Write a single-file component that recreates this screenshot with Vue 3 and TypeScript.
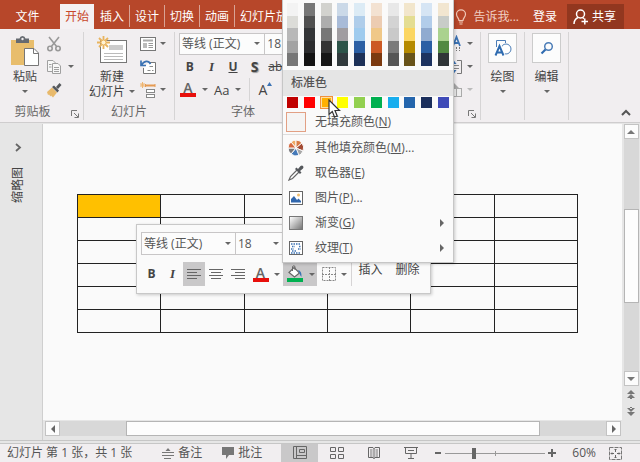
<script setup lang="ts">
import { ref } from 'vue'

const tabs: string[] = ['开始', '插入', '设计', '切换', '动画', '幻灯片放映']
const activeTab = ref('开始')
const fontName = ref('等线 (正文)')
const fontSize = ref('18')
const zoomLevel = ref(28)

const themeColors: string[][] = [
  ['#f3f3f3', '#dcdcd8', '#b8b8b8', '#a3a3a3', '#777777'],
  ['#777777', '#505050', '#333537', '#2c2d2f', '#141414'],
  ['#d2d2ce', '#adadad', '#777777', '#343434', '#171717'],
  ['#cbd9e8', '#a8bbd8', '#a09da1', '#2d5449', '#313a3d'],
  ['#dcebf5', '#afcdea', '#9fcbee', '#2b5fa4', '#1d3158'],
  ['#f3e2d2', '#ecccb2', '#f0c888', '#cc5a25', '#7c3a10'],
  ['#e8e8e8', '#d3d3d3', '#c9c9c9', '#7b7b7b', '#565656'],
  ['#f2e6cc', '#e4dd92', '#fbd662', '#b58a00', '#685319'],
  ['#d6e5f4', '#b2cdea', '#90abd0', '#2b5fa4', '#1d3360'],
  ['#f2e6d0', '#c8ccc8', '#aad28e', '#528a42', '#303638'],
]
const standardColors: string[] = [
  '#c00000', '#ff0000', '#ffb000', '#ffff00', '#92d050',
  '#00b050', '#18aeee', '#2465ac', '#1b2f5c', '#3f4bb8',
]
const selectedColor = '#ffb000'

interface MenuItem { icon: string; text: string; key: string; tail: string; sub: boolean }
const menuItems: MenuItem[] = [
  { icon: 'wheel', text: '其他填充颜色', key: 'M', tail: '...', sub: false },
  { icon: 'dropper', text: '取色器', key: 'E', tail: '', sub: false },
  { icon: 'picture', text: '图片', key: 'P', tail: '...', sub: false },
  { icon: 'gradient', text: '渐变', key: 'G', tail: '', sub: true },
  { icon: 'texture', text: '纹理', key: 'T', tail: '', sub: true },
]
</script>

<template>
  <div class="window">
    <header class="tabbar">
      <button class="tab file">文件</button>
      <button
        v-for="t in tabs" :key="t" class="tab" :class="{ active: t === activeTab }"
        @click="activeTab = t"
      >{{ t }}</button>
      <span class="grow"></span>
      <button class="tell">
        <svg width="12" height="16" viewBox="0 0 12 16"><path d="M4 11.5C4 9 1.5 8 1.5 5.200A4.500 4.300 0 0 1 10.500 5.200C10.500 8 8 9 8 11.500ZM4 13H8M4.500 15H7.500" fill="none" stroke="#f0c9b8" stroke-width="1.200" /></svg>
        告诉我...
      </button>
      <button class="login">登录</button>
      <button class="share">
        <svg width="16" height="16" viewBox="0 0 16 16"><g fill="none" stroke="#fff" stroke-width="1.500"><circle cx="7.500" cy="5" r="4" /><path d="M1 15C1 11.500 3 9.500 5 8.500M9.500 8.500L11 9.700M8.500 12.500H15M11.800 9.500V15.500" /></g></svg>
        共享
      </button>
    </header>

    <section class="ribbon">
      <div class="group clipboard">
        <div class="body">
          <button class="big">
            <span class="pic"><svg width="30" height="32" viewBox="0 0 30 32"><rect x="1" y="5" width="23" height="25" fill="#e8bd6c" /><path d="M6 8V3.500H9.500Q10 1 12.500 1T15.500 3.500H19V8Z" fill="#666a70" /><circle cx="12.500" cy="4" r="1.200" fill="#f1eef0" /><path d="M14.500 13.500H24L28.500 18V30.500H14.500Z" fill="#fff" stroke="#777" /><path d="M23.500 13.500V18.500H28.500" fill="none" stroke="#777" /></svg></span>
            <span>粘贴</span><span><i class="caret"></i></span>
          </button>
          <div class="rows">
            <button aria-label="剪切"><svg width="16" height="16" viewBox="0 0 16 16"><g fill="none" stroke="#999" stroke-width="1.600"><path d="M3 1L11 11M13 1L5 11" /><circle cx="4" cy="12.500" r="2.200" /><circle cx="12" cy="12.500" r="2.200" /></g></svg></button>
            <button aria-label="复制"><svg width="16" height="16" viewBox="0 0 16 16"><g fill="#f7f7f7" stroke="#a0a0a0"><path d="M1.500 1.500H7L9.500 4V12.500H1.500Z" /><path d="M6.500 4.500H12L14.500 7V14.500H6.500Z" /><path d="M3 5.500H5.500M3 8H5.500M8 8.500H13M8 10.500H13M8 12.500H13" /></g></svg><i class="caret"></i></button>
            <button aria-label="格式刷"><svg width="16" height="16" viewBox="0 0 16 16"><path d="M1 10L6 5.500L11 10.500L7 15.500L5 13.500L4.500 14.500L3 12.500L2 13Z" fill="#e8b96b" /><path d="M6 5L8 3.500L13 8.500L11.500 10.500ZM10 5L13.500 1L15.500 3L12 7Z" fill="#55585c" /></svg></button>
          </div>
        </div>
        <div class="caption">剪贴板<svg class="launch" width="8" height="8" viewBox="0 0 8 8"><path d="M.5 6V.5H6M3 3L7 7M7.500 3.500V7.500H3.500" fill="none" stroke="#777" /></svg></div>
      </div>

      <div class="group slides">
        <div class="body">
          <button class="big">
            <span class="pic"><svg width="30" height="30" viewBox="0 0 30 30"><rect x="3.500" y="4.500" width="26" height="22" fill="#fff" stroke="#777" /><rect x="12" y="9" width="14" height="5" fill="#ccc" /><path d="M7 17.500H26M7 20.500H26M7 23.500H26" stroke="#bbb" /><path d="M6.500 0V13M0 6.500H13M2 2L11 11M11 2L2 11" stroke="#e9b45e" stroke-width="1.800" /><circle cx="6.500" cy="6.500" r="2.500" fill="#fff3d5" stroke="#e9b45e" /></svg></span>
            <span>新建</span><span class="wide">幻灯片<i class="caret"></i></span>
          </button>
          <div class="rows">
            <button aria-label="版式"><svg width="16" height="16" viewBox="0 0 16 16"><rect x=".5" y="1.500" width="15" height="13" fill="#fff" stroke="#777" /><rect x="3" y="3.500" width="10" height="2" fill="#aaa" /><rect x="3" y="7" width="4" height="5" fill="#bbb" /><path d="M8.500 7.500H13M8.500 9.500H13M8.500 11.500H13" stroke="#999" /></svg><i class="caret"></i></button>
            <button aria-label="重置"><svg width="16" height="16" viewBox="0 0 16 16"><path d="M8.500 3.500H15.500V14.500H3.500V9" fill="#fff" stroke="#777" /><path d="M9.500 7.500H13M7.500 11.500H10.500M12 11.500H13.500" stroke="#888" /><path d="M1 1.500V6.500H6M1.500 6C4 1.500 8.500 1 10.500 5" fill="none" stroke="#3c73b4" stroke-width="1.700" /></svg></button>
            <button aria-label="节"><svg width="16" height="16" viewBox="0 0 16 16"><path d="M5.500 3.500H15" stroke="#e59a52" stroke-width="2" /><path d="M5.500 2V5M15 2V5" stroke="#e59a52" /><rect x="6.500" y="7.500" width="8" height="3" fill="#fff" stroke="#888" /><rect x="6.500" y="12.500" width="8" height="3" fill="#fff" stroke="#888" /><path d="M2.500 0V6M0 3H5M.5 1L4.500 5M4.500 1L.5 5" stroke="#efb46e" /></svg><i class="caret"></i></button>
          </div>
        </div>
        <div class="caption">幻灯片</div>
      </div>

      <div class="group font">
        <div class="fontrow combos">
          <label class="combo name"><select v-model="fontName" aria-label="字体"><option>等线 (正文)</option></select><i class="caret"></i></label>
          <label class="combo size"><select v-model="fontSize" aria-label="字号"><option>18</option></select></label>
        </div>
        <div class="fontrow styles">
          <button class="b">B</button><button class="i">I</button><button class="b u">U</button><button class="b s">S</button><button class="k">abc</button>
        </div>
        <div class="fontrow effects">
          <button class="fontcolor" aria-label="字体颜色"><span>A</span></button><i class="caret"></i>
          <button class="case">Aa</button><i class="caret"></i>
          <span class="rule"></span>
          <button class="grow-font">A<svg width="5" height="4" viewBox="0 0 5 4"><path d="M0 4L2.500 0L5 4Z" fill="#3c73b4" /></svg></button>
        </div>
        <div class="caption">字体</div>
      </div>

      <div class="group para">
        <div class="body">
          <div class="rows">
            <button aria-label="文字方向"><svg width="16" height="18" viewBox="0 0 16 18"><path d="M6 11L9.500 2L13 11M7.500 8H11.500" fill="none" stroke="#3c73b4" stroke-width="1.800" /><path d="M6.500 12V16M9.500 12V16M12.500 12V16" stroke="#777" stroke-dasharray="2 1" /></svg><i class="caret"></i></button>
            <button aria-label="对齐文本"><svg width="16" height="16" viewBox="0 0 16 16"><path d="M10 1.500H14.500V14.500H10" fill="none" stroke="#777" /><path d="M1 6.500H12M1 9.500H12" stroke="#888" /><path d="M3.500 5L6.500 1L9.500 5ZM3.500 11L6.500 15L9.500 11Z" fill="#3c73b4" /></svg><i class="caret"></i></button>
            <button aria-label="转换为图形"><svg width="16" height="16" viewBox="0 0 16 16"><path d="M1 1H7L12 6H3Z" fill="#aaa" /><rect x="3.500" y="6.500" width="11" height="8" fill="#eee" stroke="#aaa" /><path d="M9.500 6V14" stroke="#aaa" /></svg><i class="caret pale"></i></button>
          </div>
        </div>
        <div class="caption"><svg class="launch" width="8" height="8" viewBox="0 0 8 8"><path d="M.5 6V.5H6M3 3L7 7M7.500 3.500V7.500H3.500" fill="none" stroke="#777" /></svg></div>
      </div>

      <div class="group single">
        <button class="big boxed">
          <span class="pic"><svg width="18" height="18" viewBox="0 0 18 18"><path d="M2.500 8V1.500H11.500V4" fill="none" stroke="#4c7db7" /><circle cx="12" cy="10" r="5" fill="#fff" stroke="#4c7db7" /><path d="M1.500 16.500L5.500 7L9.500 16.500M3.500 13.500H7.500" fill="none" stroke="#fff" stroke-width="4" /><path d="M1.500 16.500L5.500 7L9.500 16.500M3.500 13.500H7.500" fill="none" stroke="#2f6bb0" stroke-width="2" /></svg></span>
          <span>绘图</span><span><i class="caret"></i></span>
        </button>
      </div>
      <div class="group single">
        <button class="big boxed">
          <span class="pic"><svg width="14" height="14" viewBox="0 0 14 14"><circle cx="8.500" cy="5.500" r="3.800" fill="none" stroke="#4c7db7" stroke-width="1.500" /><path d="M5.500 8.500L1.500 12.500" stroke="#2f6bb0" stroke-width="2.200" /></svg></span>
          <span>编辑</span><span><i class="caret"></i></span>
        </button>
      </div>
      <button class="collapse" aria-label="折叠功能区"><svg width="10" height="7" viewBox="0 0 10 7"><path d="M1 6L5 2L9 6" fill="none" stroke="#555" stroke-width="2" /></svg></button>
    </section>

    <main class="workspace">
      <aside class="thumbs">
        <button aria-label="展开"><svg width="7" height="9" viewBox="0 0 7 9"><path d="M1 1L5 4.500L1 8" fill="none" stroke="#666" stroke-width="1.800" /></svg></button>
        <span class="vertical">缩略图</span>
      </aside>
      <div class="stage">
        <div class="slide">
          <table>
            <tbody>
              <tr v-for="r in 6" :key="r"><td v-for="c in 6" :key="c" :class="{ filled: r === 1 && c === 1 }"></td></tr>
            </tbody>
          </table>
        </div>
        <div class="hscroll">
          <button aria-label="向左"><i class="tri left"></i></button>
          <span class="track"><span class="thumb"></span></span>
          <button aria-label="向右"><i class="tri right"></i></button>
        </div>
      </div>
      <div class="vscroll">
        <button aria-label="向上"><i class="tri up"></i></button>
        <span class="track"><span class="thumb"></span></span>
        <button aria-label="向下"><i class="tri down"></i></button>
        <button class="flat" aria-label="上一张"><svg width="8" height="9" viewBox="0 0 8 9"><path d="M0 4L4 0L8 4ZM0 8L4 4L8 8ZM3 7H5V9H3Z" fill="#777" /></svg></button>
        <button class="flat" aria-label="下一张"><svg width="8" height="9" viewBox="0 0 8 9"><path d="M0 1L4 5L8 1ZM0 5L4 9L8 5ZM3 0H5V2H3Z" fill="#777" /></svg></button>
      </div>
    </main>

    <footer class="status">
      <span class="count">幻灯片 第 1 张，共 1 张</span>
      <button class="note"><svg width="12" height="12" viewBox="0 0 12 12"><path d="M3.500 4L6 1L8.500 4Z" fill="#777" /><path d="M0 5.500H12M0 8.500H12M2 11.500H9" stroke="#777" /></svg>备注</button>
      <button class="comment"><svg width="12" height="12" viewBox="0 0 12 12"><path d="M0 0H12V8H7L4 12V8H0Z" fill="#777" /></svg>批注</button>
      <span class="grow"></span>
      <div class="views">
        <button class="on" aria-label="普通"><svg width="14" height="14" viewBox="0 0 14 14"><path d="M.5 .5H13.500V12.500H.5ZM3.500 .5V12M3.500 9.500H13M6.500 3.500H11.500V6.500H6.500Z" fill="none" stroke="#666" /></svg></button>
        <button aria-label="幻灯片浏览"><svg width="14" height="14" viewBox="0 0 14 14"><path d="M.5 1.500H5.500V5.500H.5ZM8.500 1.500H13.500V5.500H8.500ZM.5 8.500H5.500V12.500H.5ZM8.500 8.500H13.500V12.500H8.500Z" fill="none" stroke="#666" /></svg></button>
        <button aria-label="阅读视图"><svg width="14" height="14" viewBox="0 0 14 14"><path d="M1.500 1.500H6L7 2.500L8 1.500H12.500V11.500H8L7 12.500L6 11.500H1.500ZM7 2V13" fill="none" stroke="#666" /><path d="M3 4H5.500M3 6H5.500M3 8H5.500M3 10H5.500M8.500 4H11M8.500 6H11M8.500 8H11M8.500 10H11" stroke="#777" /></svg></button>
        <button aria-label="放映"><svg width="14" height="14" viewBox="0 0 14 14"><path d="M0 1.500H14M1.500 2V7.500H12.500V2M7 8V12M4 12.500H10M4 4.500H10" fill="none" stroke="#666" /></svg></button>
      </div>
      <div class="zoom">
        <button aria-label="缩小"><svg width="8" height="8" viewBox="0 0 8 8"><path d="M1 4H7" stroke="#666" stroke-width="2" /></svg></button>
        <input v-model.number="zoomLevel" type="range" min="0" max="100" aria-label="显示比例" />
        <button aria-label="放大"><svg width="8" height="8" viewBox="0 0 8 8"><path d="M0 4H8M4 0V8" stroke="#666" stroke-width="2" /></svg></button>
      </div>
      <span class="percent">60%</span>
      <button class="fit" aria-label="适应窗口"><svg width="13" height="13" viewBox="0 0 13 13"><rect x=".5" y=".5" width="12" height="12" fill="none" stroke="#777" stroke-dasharray="4 1" /><path d="M6.500 2V5M6.500 8V11M2 6.500H5M8 6.500H11M5.500 3L6.500 2L7.500 3M5.500 10L6.500 11L7.500 10M3 5.500L2 6.500L3 7.500M10 5.500L11 6.500L10 7.500" fill="none" stroke="#666" /></svg></button>
    </footer>

    <div class="minibar">
      <div class="minirow">
        <label class="combo name"><select v-model="fontName" aria-label="字体"><option>等线 (正文)</option></select><i class="caret"></i></label>
        <label class="combo size"><select v-model="fontSize" aria-label="字号"><option>18</option></select><i class="caret"></i></label>
      </div>
      <div class="minirow tools">
        <button class="b">B</button>
        <button class="i">I</button>
        <button class="align on" aria-label="左对齐"><svg width="14" height="11" viewBox="0 0 14 11"><path d="M0 .5H14M0 3.500H10M0 6.500H14M0 9.500H10" stroke="#666" /></svg></button>
        <button class="align" aria-label="居中"><svg width="14" height="11" viewBox="0 0 14 11"><path d="M0 .5H14M2 3.500H12M0 6.500H14M2 9.500H12" stroke="#666" /></svg></button>
        <button class="align" aria-label="右对齐"><svg width="14" height="11" viewBox="0 0 14 11"><path d="M0 .5H14M4 3.500H14M0 6.500H14M4 9.500H14" stroke="#666" /></svg></button>
        <button class="split" aria-label="字体颜色"><span class="fontcolor"><span>A</span></span><i class="caret"></i></button>
        <button class="split on" aria-label="底纹"><svg width="18" height="18" viewBox="0 0 18 18"><rect x="1" y="13" width="16" height="4" fill="#00b050" /><path d="M3 7.500L8 2.500L13.500 8L8.500 12Z" fill="#fff" stroke="#666" stroke-width="1.200" /><path d="M6.500 6V1.500Q8 0 9 1.500V5" fill="none" stroke="#666" /><path d="M12 5Q16 6 15.500 12Q13.500 10 13.500 8Z" fill="#3c73b4" /></svg><i class="caret"></i></button>
        <button class="split" aria-label="边框"><svg width="14" height="14" viewBox="0 0 14 14"><path d="M.5 .5H13.500V13.500H.5ZM7.500 0V14M0 7.500H14" fill="none" stroke="#888" stroke-dasharray="2 1" /></svg><i class="caret"></i></button>
        <span class="rule"></span>
        <button class="word">插入</button>
        <button class="word">删除</button>
      </div>
    </div>

    <div class="menu">
      <div class="theme">
        <div v-for="(col, ci) in themeColors" :key="ci" class="column">
          <button v-for="(c, ri) in col" :key="ri" :style="{ background: c }" :aria-label="c"></button>
        </div>
      </div>
      <h2>标准色</h2>
      <div class="standard">
        <button
          v-for="c in standardColors" :key="c" :class="{ chosen: c === selectedColor }"
          :style="{ background: c }" :aria-label="c"
        ></button>
      </div>
      <button class="item nofill"><span class="ico"><span class="empty"></span></span><span>无填充颜色(<u>N</u>)</span></button>
      <button v-for="m in menuItems" :key="m.key" class="item">
        <span class="ico">
          <svg v-if="m.icon === 'wheel'" width="16" height="16" viewBox="0 0 16 16"><g stroke="#fafafa"><path d="M8 8L3 2A8 8 0 0 1 8 0Z" fill="#efaa65" /><path d="M8 8V0A8 8 0 0 1 14 3Z" fill="#d97b45" /><path d="M8 8L14 3A8 8 0 0 1 15 11Z" fill="#a34b34" /><path d="M8 8L15 11A8 8 0 0 1 10 16Z" fill="#a8a8a8" /><path d="M8 8L11 15.500A8 8 0 0 1 3 14Z" fill="#4479b8" /><path d="M8 8L3 14A8 8 0 0 1 0 8Z" fill="#77787c" /><path d="M8 8H0A8 8 0 0 1 3 2Z" fill="#d6693f" /></g></svg>
          <svg v-else-if="m.icon === 'dropper'" width="16" height="16" viewBox="0 0 16 16"><path d="M9 5L2.500 11.500L1 15L4.500 13.500L11 7" fill="#fff" stroke="#666" stroke-width="1.200" /><path d="M7 4L8.500 2.500L10 4L12.500 1Q14 0 15 1T15 3.500L12 6L13.500 7.500L12 9Z" fill="#55585c" /></svg>
          <svg v-else-if="m.icon === 'picture'" width="14" height="14" viewBox="0 0 14 14"><rect x=".5" y=".5" width="13" height="13" fill="#fff" stroke="#666" /><path d="M2 11.500V8L5 5L8 9L9.500 7.500L12 10V11.500Z" fill="#3167ad" /><circle cx="9.500" cy="4" r="1.500" fill="#f0bd70" /></svg>
          <span v-else-if="m.icon === 'gradient'" class="gradient"></span>
          <svg v-else width="14" height="14" viewBox="0 0 14 14"><rect x=".5" y=".5" width="13" height="13" fill="#fff" stroke="#666" /><path d="M2 3H12M3 5.500H6M10 5.500H12M2 8H5M9 8H12M3 10H7M2 12H12" stroke="#3c73b4" stroke-width="1.500" stroke-dasharray="1.500 1" /></svg>
        </span>
        <span>{{ m.text }}(<u>{{ m.key }}</u>){{ m.tail }}</span>
        <i v-if="m.sub" class="tri right"></i>
      </button>
    </div>

    <svg class="pointer" width="14" height="20" viewBox="0 0 14 20"><path d="M1 1V15.500L4.300 12.500L6.500 18L9.200 17L7 11.500H11.500Z" fill="#fff" stroke="#333" stroke-width="1.200" /></svg>
  </div>
</template>

<style>
body { margin: 0; }
html, body, #app { height: 100%; }
</style>

<style scoped>
.window {
  position: relative; display: flex; flex-direction: column; height: 100%; min-height: 462px;
  overflow: hidden; background: #e6e6e6; color: #444;
  font: 12px/16px "Open Sans", "Noto Sans CJK SC", sans-serif;
}
.window * { box-sizing: border-box; }
button {
  display: flex; align-items: center; justify-content: center; margin: 0; padding: 0;
  border: 0; background: none; color: inherit; font: inherit; white-space: nowrap;
}
svg { display: block; flex: none; }
.grow { flex: 1; }
.caret { flex: none; width: 0; height: 0; border: 3px solid transparent; border-top-color: #666; border-bottom: 0; }
.caret.pale { border-top-color: #bbb; }
.tri { width: 0; height: 0; border: 4px solid transparent; }
.tri.left { border-right-color: #666; border-left: 0; }
.tri.right { border-left-color: #666; border-right: 0; }
.tri.up { border-bottom-color: #777; border-top: 0; }
.tri.down { border-top-color: #777; border-bottom: 0; }
.rule { width: 1px; align-self: stretch; background: #d6d4d5; }

.tabbar { display: flex; align-items: stretch; height: 29px; padding-top: 4px; background: #b7472a; color: #fff; }
.tab { position: relative; padding: 0 5px; margin-right: 1px; }
.tab.file { width: 55px; margin-right: 5px; }
.tab.active { background: #f4f1f3; color: #c8472a; }
.tab:nth-child(n+3)::after { content: ""; position: absolute; right: -1px; top: 1px; bottom: 2px; width: 1px; background: #d9a395; }
.tell { gap: 7px; margin-right: 14px; color: #f0d0c4; }
.login { margin-right: 10px; }
.share { gap: 3px; padding: 0 8px 0 6px; margin-right: 16px; background: #92371f; }

.ribbon { display: flex; height: 94px; background: #f1eef0; border-bottom: 1px solid #cfcdce; }
.group { display: flex; flex-direction: column; margin: 3px 0 2px; border-right: 1px solid #d6d4d5; }
.body { display: flex; height: 69px; }
.caption { position: relative; display: flex; align-items: center; justify-content: center; height: 19px; padding-top: 3px; color: #666; }
.launch { position: absolute; right: 4px; bottom: 2px; }
.rows { display: grid; grid-template-rows: repeat(3, 23px); }
.rows button { justify-content: flex-start; gap: 4px; }
.big { flex-direction: column; justify-content: flex-start; line-height: 15px; }
.big > span { display: flex; align-items: center; justify-content: center; height: 15px; }
.big > .pic { height: 37px; }
.wide { gap: 4px; }
.clipboard { width: 84px; }
.clipboard .body { padding-left: 11px; gap: 7px; }
.clipboard .big { width: 28px; }
.clipboard .rows button { gap: 6px; }
.clipboard .caption { padding-right: 18px; }
.slides { width: 91px; }
.slides .body { padding-left: 6px; gap: 6px; }
.slides .big { width: 44px; }
.font { width: 117px; padding-left: 4px; }
.fontrow { display: flex; align-items: center; height: 23px; }
.combo { display: flex; align-items: center; height: 22px; padding: 0 4px 0 2px; background: #fcfcfc; border: 1px solid #c8c6c7; }
.combo + .combo { margin-left: -1px; }
.combo select { flex: 1; min-width: 0; padding: 0; border: 0; appearance: none; background: none; color: #555; font: inherit; outline: 0; }
.font .name { width: 100px; }
.font .size { width: 30px; }
.styles button { width: 22px; }
.styles .k { width: 26px; text-decoration: line-through; }
.b { font-weight: 700; }
.i { font-style: italic; font-weight: 700; font-family: "Liberation Serif", serif; font-size: 13px; }
.u { text-decoration: underline; }
.s { font-size: 14px; text-shadow: 1px 1px 1px #999; }
.effects { gap: 6px; padding-left: 1px; }
.fontcolor { display: flex; justify-content: center; width: 16px; height: 15px; border-bottom: 4px solid #e8100c; font-size: 14px; line-height: 11px; font-weight: 600; color: #666; }
.effects .case { font-size: 13px; }
.effects .grow-font { align-items: flex-start; font-size: 14px; }
.effects .rule { margin: 0 2px; }
.font .caption { padding-left: 16px; }
.para { flex: 1; }
.para .body { justify-content: flex-end; padding-right: 7px; }
.single { width: 44px; padding: 1px 7px 0; }
.boxed { width: 29px; }
.boxed > .pic { width: 29px; height: 30px; background: #fcfcfc; border: 1px solid #ccc; }
.boxed > .pic + span { height: 26px; }
.boxed > span:last-child { height: 4px; }
.collapse { align-self: flex-end; margin: 0 9px 6px 52px; }

.workspace { flex: 1; display: flex; min-height: 0; padding-top: 1px; border-bottom: 1px solid #c6c6c6; }
.thumbs { display: flex; flex-direction: column; align-items: center; gap: 15px; width: 43px; padding: 19px 6px 0 0; border-right: 1px solid #cfcfcf; }
.vertical { writing-mode: vertical-rl; text-orientation: sideways; transform: rotate(180deg); }
.stage { flex: 1; display: flex; flex-direction: column; min-width: 0; }
.slide { flex: 1; padding: 70px 44px 0 34px; background: #fafafa; }
table { width: 100%; border-collapse: collapse; table-layout: fixed; }
tr { height: 23px; }
td { padding: 0; border: 1px solid #222; }
.filled { background: #ffc000; }
.hscroll { display: flex; height: 20px; padding: 1px 1px 4px 2px; }
.hscroll button, .vscroll button { flex: none; width: 15px; height: 15px; background: #fcfcfc; border: 1px solid #c3c3c3; }
.track { flex: 1; display: flex; background: #d8d8d8; }
.thumb { background: #fdfdfd; border: 1px solid #b5b5b5; }
.hscroll .thumb { width: 76%; margin-left: 12%; }
.vscroll { display: flex; flex-direction: column; align-items: center; width: 18px; padding: 0 1px 20px; }
.vscroll .track { flex-direction: column; width: 15px; }
.vscroll .thumb { height: 94px; margin-top: 70px; }
.vscroll .flat { height: 17px; background: none; border: 0; }

.status { display: flex; align-items: center; height: 19px; margin-top: 2px; padding: 0 18px 0 7px; background: #f1eef0; border-top: 1px solid #c6c6c6; color: #555; }
.status button { gap: 4px; }
.note { margin-left: 30px; }
.comment { margin-left: 20px; }
.views { display: flex; align-self: stretch; margin-right: 5px; }
.views button { width: 37px; }
.on { background: #c9c8c9; }
.zoom { display: flex; align-items: center; gap: 3px; margin-right: 16px; }
.zoom input {
  width: 100px; height: 14px; margin: 0; appearance: none;
  background:
    linear-gradient(#999, #999) 50px 50% / 1px 5px no-repeat,
    linear-gradient(#999, #999) 0 50% / 100% 1px no-repeat;
}
.zoom input::-webkit-slider-thumb { appearance: none; width: 4px; height: 11px; background: #666; }
.percent { margin-right: 13px; }

.minibar { position: absolute; left: 136px; top: 224px; width: 295px; height: 70px; padding: 7px 4px; background: #fafafa; border: 1px solid #c8c8c8; box-shadow: 1px 1px 3px #0003; }
.minirow { display: flex; }
.minibar .combo { height: 23px; }
.minibar .name { width: 95px; }
.minibar .size { width: 49px; }
.tools { height: 24px; margin-top: 7px; }
.tools button { width: 21px; }
.tools .align { width: 22px; }
.tools .split { width: 34px; gap: 5px; }
.tools .word { width: 37px; align-items: flex-start; }

.menu { position: absolute; left: 282px; top: 0; width: 172px; padding-bottom: 2px; background: #fafafa; border: 1px solid #c6c6c6; border-top: 0; box-shadow: 1px 1px 3px #0003; }
.theme { display: flex; justify-content: space-between; height: 66px; padding: 3px 4px 0; }
.column { display: flex; flex-direction: column; width: 11px; }
.column button { flex: 1; }
h2 { margin: 4px 0 0; padding: 0 8px; height: 26px; font-size: 12px; font-weight: 500; line-height: 26px; color: #555; background: #e5e5e5; }
.standard { display: flex; justify-content: space-between; padding: 1px 4px; height: 14px; }
.standard button { width: 11px; height: 11px; }
.standard .chosen { outline: 1px solid #f0903c; border: 1px solid #ffe0a0; }
.item { width: 100%; height: 25px; padding: 0 9px 0 3px; justify-content: flex-start; color: #555; }
.item .tri { margin-left: auto; }
.item.nofill { border-bottom: 1px solid #ddd; }
.ico { display: flex; align-items: center; justify-content: center; width: 20px; margin-right: 9px; }
.empty { width: 20px; height: 20px; border: 1px solid #e2a084; background: #f5f4f3; }
.gradient { width: 14px; height: 14px; border: 1px solid #777; background: linear-gradient(135deg, #fff, #777); }
.pointer { position: absolute; left: 328px; top: 99px; }
</style>
